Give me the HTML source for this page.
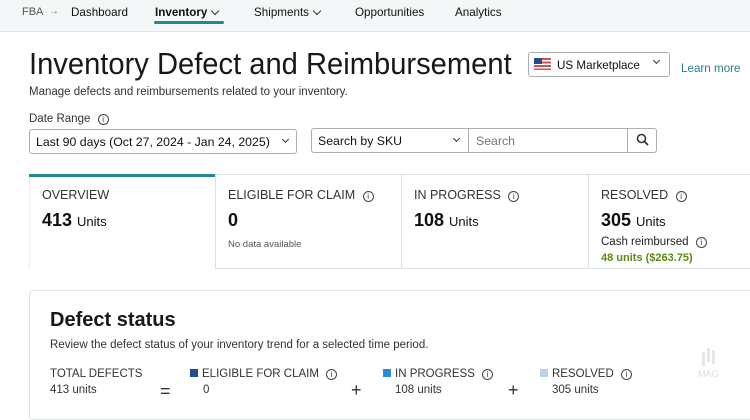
<!DOCTYPE html>
<html><head><meta charset="utf-8"><style>
*{margin:0;padding:0;box-sizing:border-box}
body{width:750px;height:400px;overflow:hidden;background:#fff;font-family:"Liberation Sans",sans-serif;color:#0f1111;position:relative}
.a{position:absolute;white-space:nowrap}
.sx{transform:scaleX(.97);transform-origin:left center}
.nav{position:absolute;left:0;top:0;width:750px;height:32px;background:#f4f7f8;border-bottom:1px solid #e3e6e6}
.nv{font-size:12px;top:5px}
.box{position:absolute;border:1px solid #a9b0b4;border-radius:3px;background:#fff}
.chev{position:absolute;width:6px;height:6px;border-right:1.5px solid #333;border-bottom:1.5px solid #333;transform:rotate(45deg)}
.info{display:inline-block;width:11px;height:11px;border:1px solid #444;border-radius:50%;font-size:8px;line-height:9px;text-align:center;vertical-align:0;margin-left:4px;font-weight:normal}
.card{position:absolute;top:174px;height:95px;border:1px solid #dde1e2;background:#fff}
.lab{font-size:12.5px;color:#333;position:absolute;left:12px;top:13px;white-space:nowrap}
.num{position:absolute;left:12px;top:35px;font-size:18px;font-weight:bold;white-space:nowrap}
.num span{font-size:13px;font-weight:normal}
.sq{display:inline-block;width:8px;height:8px;margin-right:4px}
.t{font-size:11.5px;color:#333}
</style></head><body>
<div class="nav"></div>
<div class="a nv" style="left:22px;color:#555;font-size:11px;top:6px">FBA</div>
<div class="a nv" style="left:49px;color:#777;font-size:10px;top:6px">→</div>
<div class="a nv sx" style="left:71px">Dashboard</div>
<div class="a nv sx" style="left:155px;font-weight:bold">Inventory</div>
<div class="chev" style="left:212px;top:8px"></div>
<div class="a" style="left:154px;top:21px;width:70px;height:3px;background:#1f8a91;border-radius:2px"></div>
<div class="a nv sx" style="left:254px">Shipments</div>
<div class="chev" style="left:314px;top:8px"></div>
<div class="a nv sx" style="left:355px">Opportunities</div>
<div class="a nv sx" style="left:455px">Analytics</div>

<div class="a" style="left:29px;top:46px;font-size:31px;color:#16191a;transform:scaleX(.94);transform-origin:left center">Inventory Defect and Reimbursement</div>
<div class="box" style="left:528px;top:52px;width:142px;height:25px"></div>
<div class="a" style="left:534px;top:58px;width:17px;height:12px;background:repeating-linear-gradient(#c9565a 0 2px,#fff 2px 3.5px)"></div>
<div class="a" style="left:534px;top:58px;width:8px;height:6px;background:#2b4a8a"></div>
<div class="a sx" style="left:557px;top:58px;font-size:12px">US Marketplace</div>
<div class="chev" style="left:654px;top:58px;width:5px;height:5px"></div>
<div class="a sx" style="left:681px;top:61px;font-size:12px;color:#2a7e8c">Learn more</div>
<div class="a t" style="left:29px;top:86px">Manage defects and reimbursements related to your inventory.</div>
<div class="a t" style="left:29px;top:113px">Date Range <span class="info">i</span></div>
<div class="box" style="left:29px;top:129px;width:268px;height:25px"></div>
<div class="a" style="left:36px;top:135px;font-size:12.3px">Last 90 days (Oct 27, 2024 - Jan 24, 2025)</div>
<div class="chev" style="left:283px;top:137px;width:5px;height:5px"></div>
<div class="box" style="left:311px;top:128px;width:346px;height:25px"></div>
<div class="a" style="left:468px;top:128px;width:1px;height:25px;background:#a9b0b4"></div>
<div class="a" style="left:627px;top:128px;width:1px;height:25px;background:#a9b0b4"></div>
<div class="a" style="left:318px;top:134px;font-size:12.3px">Search by SKU</div>
<div class="chev" style="left:454px;top:136px;width:5px;height:5px"></div>
<div class="a" style="left:476px;top:134px;font-size:12.3px;color:#777">Search</div>
<svg class="a" style="left:636px;top:133px" width="13" height="13" viewBox="0 0 13 13"><circle cx="5.5" cy="5.5" r="4" fill="none" stroke="#333" stroke-width="1.6"/><line x1="8.5" y1="8.5" x2="12" y2="12" stroke="#333" stroke-width="1.8"/></svg>

<div class="card" style="left:29px;width:187px;border-color:#fff;border-left-color:#eee"><div class="a" style="left:-1px;top:-1px;width:187px;height:3px;background:#1f8a91"></div><div class="lab">OVERVIEW</div><div class="num">413 <span>Units</span></div></div>
<div class="card" style="left:215px;width:187px"><div class="lab">ELIGIBLE FOR CLAIM <span class="info">i</span></div><div class="num">0</div><div class="a" style="left:12px;top:64px;font-size:9.5px;color:#555">No data available</div></div>
<div class="card" style="left:401px;width:188px"><div class="lab">IN PROGRESS <span class="info">i</span></div><div class="num">108 <span>Units</span></div></div>
<div class="card" style="left:588px;width:170px"><div class="lab">RESOLVED <span class="info">i</span></div><div class="num">305 <span>Units</span></div><div class="a" style="left:12px;top:61px;font-size:11.5px;color:#222">Cash reimbursed <span class="info">i</span></div><div class="a" style="left:12px;top:77px;font-size:11px;color:#5b8a13;font-weight:bold">48 units ($263.75)</div></div>

<div class="a" style="left:29px;top:290px;width:730px;height:130px;border:1px solid #e1e4e5;border-radius:4px"></div>
<div class="a" style="left:50px;top:309px;font-size:20px;font-weight:bold;color:#16191a">Defect status</div>
<div class="a t" style="left:50px;top:339px">Review the defect status of your inventory trend for a selected time period.</div>
<div class="a t" style="left:50px;top:368px">TOTAL DEFECTS</div>
<div class="a t" style="left:50px;top:384px">413 units</div>
<div class="a" style="left:160px;top:381px;font-size:18px;color:#333">=</div>
<div class="a t" style="left:190px;top:368px"><span class="sq" style="background:#1d4f91"></span>ELIGIBLE FOR CLAIM <span class="info">i</span></div>
<div class="a t" style="left:203px;top:384px">0</div>
<div class="a" style="left:351px;top:380px;font-size:18px;color:#333">+</div>
<div class="a t" style="left:383px;top:368px"><span class="sq" style="background:#2a8ad4"></span>IN PROGRESS <span class="info">i</span></div>
<div class="a t" style="left:395px;top:384px">108 units</div>
<div class="a" style="left:508px;top:380px;font-size:18px;color:#333">+</div>
<div class="a t" style="left:540px;top:368px"><span class="sq" style="background:#b9d4ea"></span>RESOLVED <span class="info">i</span></div>
<div class="a t" style="left:552px;top:384px">305 units</div>
<div class="a" style="left:702px;top:352px;width:3px;height:14px;background:#e4e6e7;box-shadow:5px -4px 0 #e4e6e7,10px -2px 0 #e4e6e7"></div>
<div class="a" style="left:698px;top:369px;font-size:9px;color:#ddd">MAG</div>
</body></html>
